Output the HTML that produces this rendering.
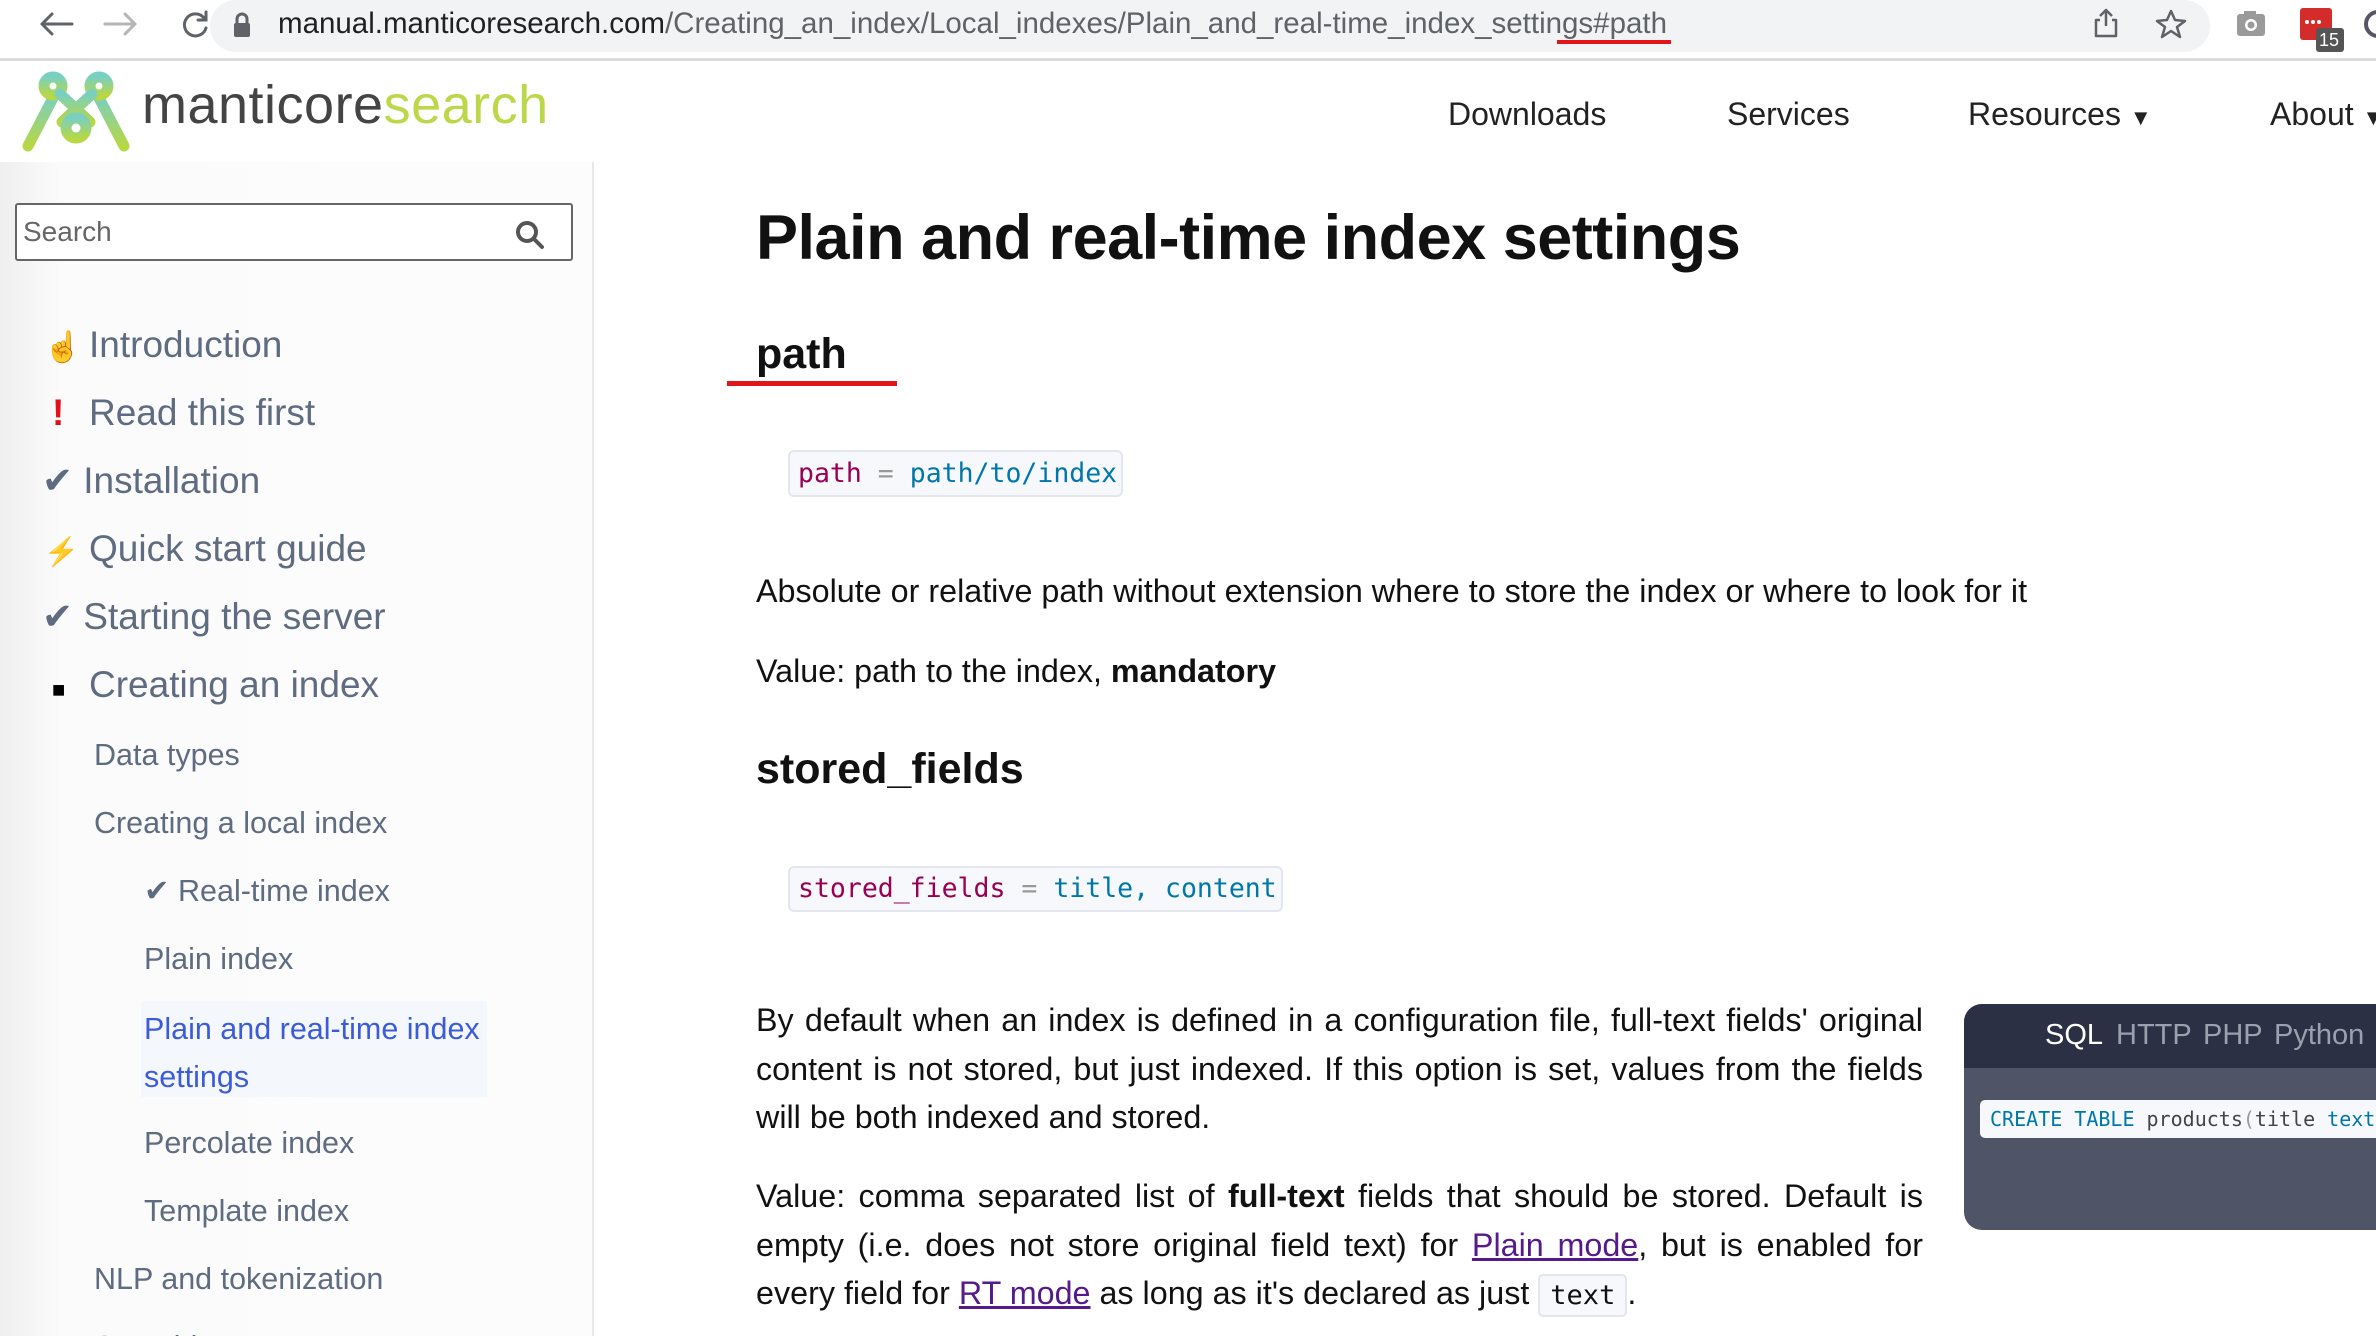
<!DOCTYPE html>
<html><head><meta charset="utf-8"><style>
*{margin:0;padding:0;box-sizing:border-box}
html,body{width:2376px;height:1336px;overflow:hidden}
body{background:#fff;font-family:"Liberation Sans",sans-serif;position:relative;color:#111}
.abs{position:absolute}
.chrome{left:0;top:0;width:2376px;height:61px;background:#fff;border-bottom:3px solid #dcdcdc}
.url{left:210px;top:0;width:2000px;height:52px;background:#f1f3f4;border-radius:26px}
.urltext{left:278px;top:7px;font-size:29.5px;color:#202124;white-space:nowrap}
.urltext span{color:#5f6368}
.hdr{left:0;top:64px;width:2376px;height:98px;background:#fff}
.nav{top:96px;font-size:32px;color:#222;white-space:nowrap}
.side{left:0;top:162px;width:594px;height:1174px;background:linear-gradient(90deg,#efefef 0,#fbfbfb 60px,#fcfcfc 100%);border-right:2px solid #e8e8ea}
.search{left:15px;top:203px;width:558px;height:58px;border:2px solid #666;border-radius:3px;background:#fff}
.mi{position:absolute;font-size:37px;color:#5f6b80;white-space:nowrap;line-height:44px}
.ic{display:inline-block;width:45px;font-size:30px}
.si{position:absolute;font-size:30.5px;color:#5f6b80;white-space:nowrap;line-height:40px}
.code{position:absolute;background:#f6f8fb;border:2px solid #e3e6ec;border-radius:6px;font-family:"DejaVu Sans Mono","Liberation Mono",monospace;font-size:26.5px;line-height:40px;padding:0 8px;white-space:nowrap}
.k{color:#990055}.v{color:#07a}.o{color:#999}
p.t{position:absolute;left:756px;width:1167px;font-size:32.3px;line-height:48.5px;text-align:justify;color:#111}
a{color:#551a8b;text-decoration:underline}
</style></head><body>
<div class="abs chrome"></div>
<div class="abs url"></div>
<svg class="abs" style="left:20px;top:8px" width="200" height="40" viewBox="0 0 200 40">
<g stroke="#5f6368" stroke-width="3" fill="none" stroke-linecap="round">
<path d="M52 16H22M22 16l10-10M22 16l10 10"/>
<path d="M115 16H85M115 16l-10-10M115 16l-10 10" stroke="#b5b5b5"/>
<path d="M184 10a11 11 0 1 0 2 10"/><path d="M186 4v8h-8"/>
</g></svg>
<svg class="abs" style="left:232px;top:12px" width="20" height="26"><rect x="2" y="11" width="16" height="14" rx="2" fill="#5f6368"/><path d="M5 11V7a5 5 0 0 1 10 0v4" stroke="#5f6368" stroke-width="3" fill="none"/></svg>
<div class="abs urltext">manual.manticoresearch.com<span>/Creating_an_index/Local_indexes/Plain_and_real-time_index_settings#path</span></div>
<div class="abs" style="left:1557px;top:40px;width:114px;height:4px;background:#e4141b"></div>
<svg class="abs" style="left:2090px;top:0px" width="286" height="60"><g stroke="#5f6368" stroke-width="2.5" fill="none" stroke-linejoin="round"><path d="M16 10v16M10 16l6-6 6 6M10 20H6v16h20V20h-4"/><path d="M81 11 l4 9 10 1-8 6 3 10-9-6-9 6 3-10-8-6 10-1z"/></g>
<rect x="147" y="14" width="28" height="22" rx="3" fill="#9a9a9a"/><rect x="154" y="11" width="12" height="5" fill="#9a9a9a"/><circle cx="161" cy="25" r="6" fill="#fff"/><circle cx="161" cy="25" r="3.5" fill="#9a9a9a"/>
<rect x="210" y="8" width="32" height="32" rx="3" fill="#d42b2b"/><circle cx="217" cy="22" r="2" fill="#fff"/><circle cx="223" cy="22" r="2" fill="#fff"/><circle cx="229" cy="22" r="2" fill="#fff"/><rect x="226" y="28" width="28" height="24" rx="3" fill="#555"/><text x="229" y="46" font-size="18" fill="#fff" font-family="Liberation Sans">15</text>
<circle cx="288" cy="24" r="12" stroke="#556" stroke-width="4" fill="none"/></svg>

<div class="abs hdr"></div>
<svg class="abs" style="left:22px;top:70px" width="108" height="82" viewBox="0 0 108 82">
<defs><linearGradient id="g" x1="0" y1="0" x2="0" y2="1"><stop offset="0" stop-color="#79cfc2"/><stop offset="1" stop-color="#b7d744"/></linearGradient></defs>
<g stroke="url(#g)" stroke-width="11" fill="none" stroke-linecap="round">
<path d="M6 76 L32 26"/><path d="M102 76 L76 26"/>
<circle cx="31" cy="16" r="9"/><circle cx="77" cy="16" r="9"/>
<path d="M38 24 L68 52"/><path d="M70 24 L40 52"/><circle cx="54" cy="58" r="10"/></g></svg>
<div class="abs" style="left:142px;top:74px;font-size:54px;color:#444;letter-spacing:0.5px">manticore<span style="color:#bcd84a">search</span></div>
<div class="abs nav" style="left:1448px">Downloads</div>
<div class="abs nav" style="left:1727px">Services</div>
<div class="abs nav" style="left:1968px">Resources <span style="font-size:22px">▼</span></div>
<div class="abs nav" style="left:2270px">About <span style="font-size:22px">▼</span></div>

<div class="abs side"></div>
<div class="abs search"><span style="position:absolute;left:6px;top:11px;font-size:28px;color:#666">Search</span>
<svg style="position:absolute;left:497px;top:14px" width="32" height="32"><circle cx="13" cy="13" r="9" stroke="#555" stroke-width="4" fill="none"/><path d="M20 20l8 8" stroke="#555" stroke-width="4" stroke-linecap="round"/></svg></div>
<div class="mi" style="left:44px;top:323px"><span class="ic" style="color:#f0b400">☝</span>Introduction</div>
<div class="mi" style="left:52px;top:391px"><span class="ic" style="color:#e0121a;font-weight:bold;width:37px;font-size:37px">!</span>Read this first</div>
<div class="mi" style="left:42px;top:459px">✔ Installation</div>
<div class="mi" style="left:44px;top:527px"><span class="ic" style="color:#f5b800;font-size:28px">⚡</span>Quick start guide</div>
<div class="mi" style="left:42px;top:595px">✔ Starting the server</div>
<div class="mi" style="left:52px;top:663px"><span class="ic" style="color:#000;font-size:22px;width:37px">■</span>Creating an index</div>
<div class="si" style="left:94px;top:735px">Data types</div>
<div class="si" style="left:94px;top:803px">Creating a local index</div>
<div class="si" style="left:144px;top:871px">✔ Real-time index</div>
<div class="si" style="left:144px;top:939px">Plain index</div>
<div class="abs" style="left:141px;top:1001px;width:346px;height:96px;background:#f4f8fd"></div>
<div class="si" style="left:144px;top:1005px;color:#3b5bdb;line-height:48px">Plain and real-time index<br>settings</div>
<div class="si" style="left:144px;top:1123px">Percolate index</div>
<div class="si" style="left:144px;top:1191px">Template index</div>
<div class="si" style="left:94px;top:1259px">NLP and tokenization</div>
<div class="si" style="left:94px;top:1327px">Searching</div>

<div class="abs" style="left:756px;top:202px;font-size:63px;font-weight:bold;letter-spacing:-0.5px;white-space:nowrap">Plain and real-time index settings</div>
<div class="abs" style="left:756px;top:330px;font-size:43px;font-weight:bold">path</div>
<div class="abs" style="left:727px;top:381px;width:170px;height:5px;background:#e4141b"></div>
<div class="code" style="left:788px;top:450px;height:47px;width:335px;padding-top:2px"><span class="k">path</span> <span class="o">=</span> <span class="v">path/to/index</span></div>
<p class="t" style="top:567px;width:1400px;text-align:left">Absolute or relative path without extension where to store the index or where to look for it</p>
<p class="t" style="top:647px;text-align:left">Value: path to the index, <b>mandatory</b></p>
<div class="abs" style="left:756px;top:745px;font-size:43px;font-weight:bold">stored_fields</div>
<div class="code" style="left:788px;top:866px;height:46px;width:495px;padding-top:1px"><span class="k">stored_fields</span> <span class="o">=</span> <span class="v">title, content</span></div>
<p class="t" style="top:996px">By default when an index is defined in a configuration file, full-text fields' original content is not stored, but just indexed. If this option is set, values from the fields will be both indexed and stored.</p>
<p class="t" style="top:1172px">Value: comma separated list of <b>full-text</b> fields that should be stored. Default is empty (i.e. does not store original field text) for <a>Plain mode</a>, but is enabled for every field for <a>RT mode</a> as long as it's declared as just <span style="font-family:'DejaVu Sans Mono',monospace;font-size:27px;background:#f6f8fb;border:2px solid #e3e6ec;border-radius:5px;padding:4px 10px">text</span>.</p>

<div class="abs" style="left:1964px;top:1004px;width:430px;height:226px;background:#4f5567;border-radius:18px;overflow:hidden">
<div style="height:64px;background:#2b3044;position:relative;font-size:29px">
<span style="position:absolute;left:81px;top:15px;color:#fff">SQL</span>
<span style="position:absolute;left:152px;top:15px;color:#9aa0ad">HTTP</span>
<span style="position:absolute;left:239px;top:15px;color:#9aa0ad">PHP</span>
<span style="position:absolute;left:310px;top:15px;color:#9aa0ad">Python</span></div>
<div style="position:absolute;left:16px;top:96px;width:420px;height:38px;background:#f6f8fb;border-radius:5px;font-family:'DejaVu Sans Mono',monospace;font-size:20px;line-height:38px;padding-left:10px;white-space:nowrap;color:#444"><span class="v">CREATE TABLE</span> products<span class="o">(</span>title <span class="v">text</span></div>
</div>
</body></html>
